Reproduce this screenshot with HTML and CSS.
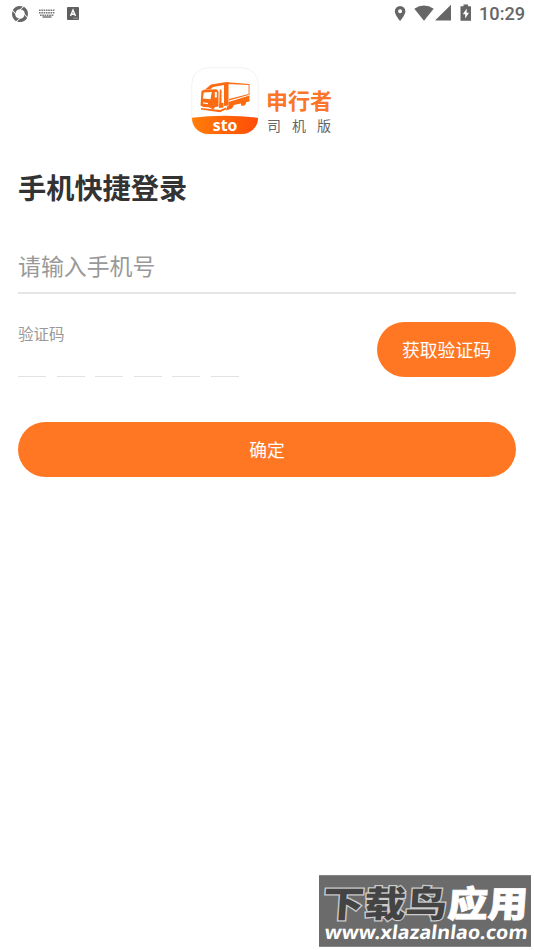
FILE: index.html
```html
<!DOCTYPE html>
<html lang="zh-CN">
<head>
<meta charset="utf-8">
<title>申行者司机版</title>
<link rel="stylesheet" href="styles.css">
</head>
<body>
<header class="status">
  <div class="status-left">
    <svg class="swirl" width="18" height="18" viewBox="0 0 18 18" fill="#666">
      <path id="blade" d="M1.8 5Q5.4-.4 12 1.6L9 4.2Q5.2 4.2 4.6 8.2Z"/>
      <use href="#blade" transform="rotate(90 9 9)"/><use href="#blade" transform="rotate(180 9 9)"/><use href="#blade" transform="rotate(270 9 9)"/>
    </svg>
    <svg class="keyboard" width="16" height="9" viewBox="0 0 16 9" stroke="#777" fill="none">
      <path d="M0 1.2H16M0 3.7H16M1 6.2H15" stroke-width="1.5" stroke-dasharray="1.6 .7"/><path d="M3.5 8H12.5" stroke-width="1.5"/>
    </svg>
    <svg class="input-a" width="12" height="13" viewBox="0 0 12 13">
      <rect width="12" height="13" rx="1" fill="#5f5f5f"/><path d="M3.5 9 6 3 8.5 9M4.4 7.2H7.6" stroke="#fff" stroke-width="1.4" fill="none"/><path d="M6 11.2H11" stroke="#aaa" stroke-width=".8"/>
    </svg>
  </div>
  <div class="status-right">
    <svg width="78" height="18" viewBox="0 0 78 18" fill="#666" class="signals">
      <path fill-rule="evenodd" d="M6.1 2A5.3 5.3 0 0 0 .8 7.3C.8 11.1 6.1 17 6.1 17S11.4 11.1 11.4 7.3A5.3 5.3 0 0 0 6.1 2ZM6.1 5.3A2 2 0 1 1 6.1 9.3 2 2 0 0 1 6.1 5.3Z"/>
      <path d="M20.3 4.8Q30 -1.8 39.7 4.8L30 16.8Z"/><path d="M41.5 16.5V16L57 .8V16.5Z"/>
      <path d="M69.5 .5H74V2.3H77V16.8H66.5V2.3H69.5Z"/><path d="M72.7 4.5 68.8 10.2H71.2V14.5L75 8.8H72.7Z" fill="#fff"/>
    </svg>
    <time>10:29</time>
  </div>
</header>
<main>
  <div class="brand">
    <svg width="68" height="68" viewBox="0 0 68 68">
      <defs>
        <linearGradient id="base"><stop stop-color="#ff7d08"/><stop offset="1" stop-color="#ff4c08"/></linearGradient>
        <clipPath id="tile"><rect x="1" y="1" width="66" height="66" rx="16"/></clipPath>
      </defs>
      <rect x=".8" y=".8" width="66.4" height="66.4" rx="16" fill="#fff" stroke="#f2f2f2"/>
      <path clip-path="url(#tile)" d="M0 51Q34 46.5 68 51V68H0Z" fill="url(#base)"/>
      <g fill="#fa6b12">
        <path d="M14 22.5 20 17.5 35.5 15 37.5 15.3V38.5L33 39V18L22 20 19 22.5Z"/>
        <path d="M36 15.2 58.5 17V18L36 17ZM57.6 17.5H58.5V28H57.6Z"/>
        <path fill-rule="evenodd" d="M10.5 24 13 22.8 25.5 22.2 27.5 24.5V39.5L24 40 22.5 42.5 19.5 41 17.5 40.3 12.5 40 9.5 38.5ZM12.8 25.5 11.8 31.5 19.5 32.3 20.8 25ZM23.8 25V30.5H25.8V25ZM12 35.2V36.4L17 37.3V36Z"/>
        <path d="M28.8 22.5H30.5V36H32.5V40.5L28 41Z"/>
        <path d="M10 41 29 43 35 40.5V42.5L29 45.2 10 42.5Z"/>
        <path d="M38 32 57.5 27V28L38 33.5Z"/>
        <path d="M37.5 35 58.5 28.5V34.5L55.5 35 54 38.2 50.5 39 49.8 36.5 43 38 41 41.5 35 43.5 36 39.5 37.5 38.8Z"/>
      </g>
      <text x="34" y="63.5" class="sto" text-anchor="middle" textLength="24.5" lengthAdjust="spacingAndGlyphs">sto</text>
    </svg>
    <div class="brand-copy"><strong>申行者</strong><span>司机版</span></div>
  </div>
  <h1>手机快捷登录</h1>
  <div class="phone">请输入手机号</div>
  <section class="verify">
    <div>
      <div class="label">验证码</div>
      <div class="digits"><i></i><i></i><i></i><i></i><i></i><i></i></div>
    </div>
    <button class="send">获取验证码</button>
  </section>
  <button class="confirm">确定</button>
</main>
<aside class="watermark">
  <svg width="212" height="72" viewBox="0 0 212 72">
    <rect width="212" height="72" fill="#6b6b6b"/><path d="M0 .5H212M0 71.5H212" stroke="#858585"/>
    <g class="mark">
      <text x="6" y="42" class="dark" textLength="124" lengthAdjust="spacingAndGlyphs" transform="skewX(-4)">下载鸟</text>
      <text x="131" y="42" class="light" textLength="80" lengthAdjust="spacingAndGlyphs" transform="skewX(-4)">应用</text>
    </g>
    <text x="13" y="64.5" class="url" textLength="203" lengthAdjust="spacingAndGlyphs" transform="skewX(-7)">www.xlazalnlao.com</text>
  </svg>
</aside>
</body>
</html>
```
FILE: styles.css
```css
* { box-sizing: border-box; }
body {
  margin: 0;
  height: 950px;
  overflow: hidden;
  position: relative;
  background: #fff;
  color: #333;
  font-family: "Noto Sans CJK SC", sans-serif;
}
.status {
  height: 28px;
  display: flex;
  justify-content: space-between;
  padding: 0 9px 0 11px;
}
.status-left { display: flex; align-items: center; height: 27px; }
.keyboard { margin-left: 10px; }
.input-a { margin-left: 12px; }
.status-right { display: flex; }
.signals { margin: 4px 7px 0 0; }
time {
  font: 500 18.2px/28px Roboto, sans-serif;
  color: #666;
  width: 46px;
  white-space: nowrap;
}
main { padding: 39px 18px 0; }
.brand { display: flex; height: 68px; padding-left: 173px; }
.sto { font: 700 16.5px "Noto Sans", sans-serif; fill: #fff; }
.brand-copy { margin: 20px 0 0 7px; }
.brand-copy strong {
  display: block;
  font-size: 22px;
  line-height: 24px;
  font-weight: 700;
  color: #fb752a;
}
.brand-copy span {
  display: block;
  font-size: 14px;
  line-height: 20px;
  margin-top: 4px;
  letter-spacing: 11px;
  margin-left: 1px;
  color: #666;
  white-space: nowrap;
}
h1 { margin: 31px 0 0; font-size: 28.2px; line-height: 42px; font-weight: 700; }
.phone {
  margin-top: 34px;
  height: 52px;
  border-bottom: 2px solid #e6e6e6;
  font-size: 22.9px;
  line-height: 47px;
  color: #999;
}
.verify { display: flex; justify-content: space-between; margin-top: 28px; height: 55px; }
.label { font-size: 15.5px; line-height: 22px; color: #999; }
.digits { display: flex; gap: 10.5px; margin-top: 32px; }
.digits i { width: 28px; height: 1px; background: #e2e2e2; }
button {
  border: 0;
  padding: 0;
  border-radius: 28px;
  background: #ff7723;
  color: #fff;
  font: 400 17.8px/55px "Noto Sans CJK SC", sans-serif;
  height: 55px;
}
.send { width: 139px; }
.confirm { display: block; width: 100%; margin-top: 45px; }
.watermark { position: absolute; left: 319px; top: 875px; height: 72px; }
.mark text { font: 900 36px "Noto Sans CJK SC", sans-serif; }
.mark .dark { fill: #444; stroke: #ccc; stroke-width: 2.5px; paint-order: stroke; }
.mark .light { fill: #fff; stroke: #fff; stroke-width: .8px; }
.url { font: 700 19px "Noto Sans", sans-serif; fill: #fff; }
```
